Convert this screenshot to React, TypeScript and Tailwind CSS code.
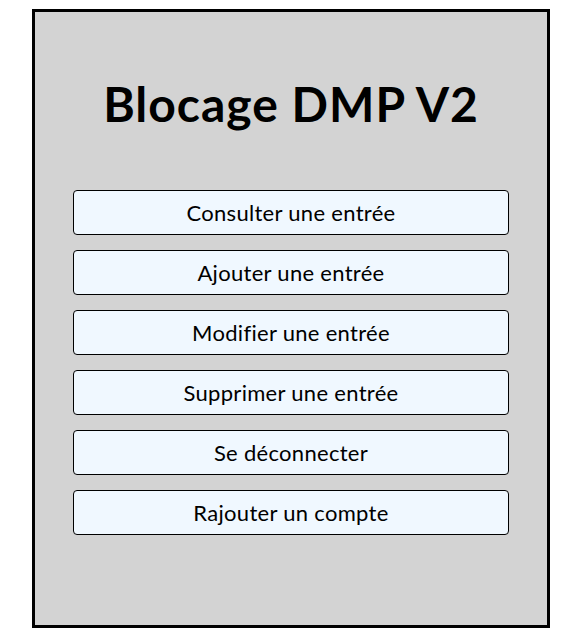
const actions = [
  "Consulter une entrée",
  "Ajouter une entrée",
  "Modifier une entrée",
  "Supprimer une entrée",
  "Se déconnecter",
  "Rajouter un compte",
];

export default function App() {
  return (
    <div className="min-h-[641px] bg-white pl-[32px] pt-[9px] font-['Lato',sans-serif] text-black">
      <div className="flex h-[619px] w-[518px] flex-col items-center border-[3px] border-black bg-[#d3d3d3]">
        <h1 className="mt-[64px] text-[48px] font-bold leading-[56px] tracking-[1px]">Blocage DMP V2</h1>
        <div className="mt-[58px] flex w-[436px] flex-col gap-[15px]">
          {actions.map((label) => (
            <button
              key={label}
              type="button"
              className="h-[45px] w-full rounded-[4px] border border-black bg-[#f0f8ff] text-[22px] tracking-[0.3px]"
            >
              {label}
            </button>
          ))}
        </div>
      </div>
    </div>
  );
}
